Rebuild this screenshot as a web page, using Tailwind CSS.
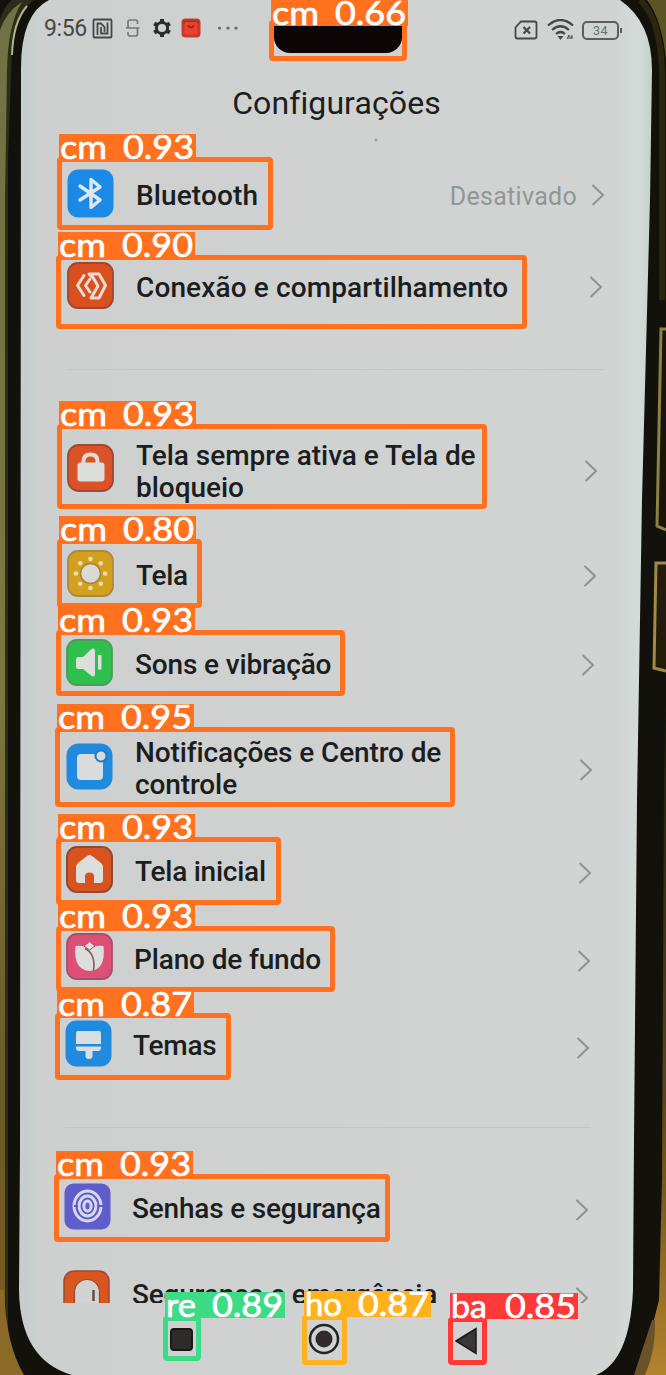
<!DOCTYPE html>
<html lang="pt-BR">
<head>
<meta charset="utf-8">
<title>Configurações</title>
<script src="https://cdn.jsdelivr.net/npm/@tailwindcss/browser@4"></script>
</head>
<body class="bg-[#14120c] font-['Roboto',sans-serif]">
<main class="relative w-[666px] h-[1375px] overflow-hidden text-[#1b1d1e]">

<!-- Phone body and lit screen -->
<svg class="absolute inset-0" width="666" height="1375" viewBox="0 0 666 1375">
  <defs>
    <linearGradient id="rim" x1="0" x2="0" y1="0" y2="1"><stop offset="0" stop-color="#6f7145"/><stop offset=".5" stop-color="#7c7742"/><stop offset=".8" stop-color="#6b5a26"/><stop offset="1" stop-color="#7a5c1c"/></linearGradient>
    <linearGradient id="gold" x1="0" x2="0" y1="0" y2="1"><stop offset="0" stop-color="#1d190b"/><stop offset=".6" stop-color="#5d4718"/><stop offset="1" stop-color="#b3832c"/></linearGradient>
    <linearGradient id="scr" x1="0" x2="1" y1="0" y2="0"><stop offset="0" stop-color="#c5cdcd"/><stop offset=".04" stop-color="#cdd0cf"/><stop offset=".94" stop-color="#d1d4d3"/><stop offset=".98" stop-color="#d3dbd8"/><stop offset="1" stop-color="#c3d0cb"/></linearGradient>
  </defs>
  <rect width="666" height="1375" fill="#12110b"/>
  <path d="M0 20Q4 6 12 0H34Q16 12 12 50L8 160V1375H0Z" fill="#2c2e18"/>
  <path d="M0 30Q6 12 22 2Q8 24 7 70L5 200V1375H0Z" fill="url(#rim)"/>
  <path d="M12 55Q13 22 27 6" fill="none" stroke="#aeb48c" stroke-width="2"/>
  <path d="M0 1290H4Q6 1345 24 1375H0Z" fill="#8a6a26"/>
  <path d="M647 0Q662 20 666 60V0Z" fill="#5c5426"/>
  <path d="M640 0Q660 18 662 70V300" fill="none" stroke="#2c2611" stroke-width="6"/>
  <path d="M666 700L664 780L662 1180L659 1300L640 1375H666Z" fill="url(#gold)"/>
  <path d="M652 1320L634 1375H645Q656 1350 655 1320Z" fill="#6a522a"/>
  <path d="M666 329H661L657 526L666 530" fill="#1a1508" stroke="#8d8144" stroke-width="3"/>
  <path d="M666 563H656L654 668L666 671" fill="#241b0a" stroke="#a08a45" stroke-width="3"/>
  <path d="M49 0Q21 14 21 68L20 1150L19 1290Q20 1360 72 1375H596Q630 1361 633 1290L634 1140L637 800L642 500L650 200L652 70Q652 22 620 0Z" fill="url(#scr)"/>
  <circle cx="376" cy="140" r="1.5" fill="#9a9d9c"/>
</svg>

<div class="relative flex flex-col">
  <!-- Status bar -->
  <header class="h-[56px] pl-[44px] pr-[44px] flex items-center text-[#454748]">
    <span class="text-[23px] leading-none tracking-[-0.4px]">9:56</span>
    <svg class="ml-[5px]" width="21" height="21" viewBox="0 0 21 21" fill="none" stroke="currentColor" stroke-width="1.8"><rect x="1.500" y="1.500" width="18" height="18" rx="1"/><path d="M5.500 17V5.500H9L12.500 9V14M9 9V15.500H15.500V4.500"/></svg>
    <svg class="ml-[12px]" width="16" height="21" viewBox="0 0 16 21" fill="none" stroke="#77797a" stroke-width="1.700"><path d="M12.500 6V4Q12.500 2 10.500 2H5Q3 2 3 4V8Q3 10 5 10H10.500Q12.500 10 12.500 12V15.500Q12.500 18 10.500 18H5Q3 18 3 15.500V14M1 10H14.500"/></svg>
    <svg class="ml-[11px]" width="20" height="20" viewBox="0 0 20 20" fill="none" stroke="#2b2d2e"><circle cx="10" cy="10" r="5.600" stroke-width="3"/><path d="M10 1V4M10 16V19M2.200 5.500L4.800 7M15.200 13L17.800 14.500M2.200 14.500L4.800 13M15.200 7L17.800 5.500" stroke-width="4"/></svg>
    <svg class="ml-[9px]" width="20" height="20" viewBox="0 0 20 20"><rect x=".5" y=".5" width="19" height="19" rx="4" fill="#cf382b"/><path d="M2 3Q10 0 18 3V6H2Z" fill="#a8352a"/><rect x="3.500" y="4" width="13" height="12.500" rx="2" fill="#e5452f"/><path d="M7 7.500Q10 11.500 13 7.500" fill="none" stroke="#8d1f18" stroke-width="1.600"/></svg>
    <svg class="ml-[16px]" width="22" height="4" viewBox="0 0 22 4" fill="#68696a"><circle cx="2.500" cy="2" r="1.600"/><circle cx="11" cy="2" r="1.600"/><circle cx="19" cy="2" r="1.600"/></svg>
    <div class="ml-auto flex items-center pt-1">
      <svg width="24" height="20" viewBox="0 0 24 20" fill="none" stroke="currentColor" stroke-width="1.800"><path d="M7 1.500H20.500Q22.500 1.500 22.500 3.500V16.500Q22.500 18.500 20.500 18.500H3.500Q1.500 18.500 1.500 16.500V7.500Z"/><path d="M9.500 7L16 13.500M16 7L9.500 13.500" stroke-width="2.200"/></svg>
      <svg class="ml-[9px]" width="28" height="22" viewBox="0 0 28 22" fill="none" stroke="currentColor" stroke-width="2.300"><path d="M1 6.500Q13.500 -4.500 26 6.500M5 11Q13.500 3.500 22 11M9 15Q13.500 11 18 15"/><path d="M10.500 17H16.500L13.500 21Z" fill="currentColor" stroke="none"/><path d="M20 20L22 16V20M24 20V17H26M23.500 19H26" stroke-width="1"/></svg>
      <div class="ml-[7px] w-[37px] h-[19px] border-2 border-[#5b5d5e] rounded-[5px] text-[12.500px] leading-[15px] text-center tracking-[0.5px] text-[#6b6d6e]">34</div>
      <div class="ml-[1px] w-[2px] h-[5px] bg-[#5b5d5e]"></div>
    </div>
  </header>

  <h1 class="h-[94px] pl-[7px] pt-[27px] text-center text-[32px] leading-[40px] tracking-[0.1px]">Configurações</h1>

  <section class="text-[28px] leading-[32px] font-medium">
    <div class="h-[90px] pl-[67px] pr-[61px] flex items-center">
      <svg class="mb-[4px] shrink-0" width="47" height="49" viewBox="0 0 47 49"><rect x=".5" y=".5" width="46" height="48" rx="11" fill="#1a8ae6"/><path d="M13 17L33 31L24 38.500V10.500L33 18L13 31" fill="none" stroke="#dfe8f0" stroke-width="3.400" stroke-linejoin="round" stroke-linecap="round"/></svg>
      <span class="ml-[22px] pt-[2px] tracking-[0.120px]">Bluetooth</span>
      <span class="ml-auto pt-[4px] text-[25px] font-normal text-[#929596] tracking-[0.300px]">Desativado</span>
      <svg class="ml-[14px]" width="14" height="22" viewBox="0 0 14 22" fill="none" stroke="#8f9293" stroke-width="2"><path d="M1.500 1L12 11L1.500 21"/></svg>
    </div>
    <div class="h-[94px] pl-[67px] pr-[63px] flex items-center">
      <svg class="mb-[4px] shrink-0" width="47" height="47" viewBox="0 0 47 47"><rect x="1" y="1" width="45" height="45" rx="10" fill="#d94f1e" stroke="#9a4934" stroke-width="1.800"/><g fill="none" stroke="#f0dcd4" stroke-width="3" stroke-linejoin="round" stroke-linecap="round"><path d="M17 13.500L10.500 23.500L17 33.500"/><path d="M22 12H32L38.500 23.500L32 36H24L31 24L26 15.500Z"/><path d="M23 17L18.500 23.500L23 30"/></g></svg>
      <span class="ml-[22px] pt-[2px] tracking-[0.120px]">Conexão e compartilhamento</span>
      <svg class="ml-auto" width="14" height="22" viewBox="0 0 14 22" fill="none" stroke="#8f9293" stroke-width="2"><path d="M1.500 1L12 11L1.500 21"/></svg>
    </div>
  </section>

  <div class="h-[76px] pl-[67px] pr-[62px] pt-[35px]"><hr class="border-[#c4c7c6]"></div>

  <section class="text-[28px] leading-[32px] font-medium">
    <div class="h-[120px] pl-[67px] pr-[68px] flex items-center">
      <svg class="mb-[4px] shrink-0" width="47" height="48" viewBox="0 0 47 48"><rect x="1" y="1" width="45" height="46" rx="11" fill="#dc5228" stroke="#9a4934" stroke-width="1.800"/><path d="M16.500 20V17Q16.500 10.500 23.500 10.500T30.500 17V20" fill="none" stroke="#dedcd8" stroke-width="4"/><rect x="10.500" y="18.500" width="27" height="19" rx="3" fill="#dcdedc"/></svg>
      <span class="ml-[22px] w-[380px] pt-[4px] tracking-[-0.030px]">Tela sempre ativa e Tela de<br>bloqueio</span>
      <svg class="ml-auto mt-[2px]" width="14" height="22" viewBox="0 0 14 22" fill="none" stroke="#8f9293" stroke-width="2"><path d="M1.500 1L12 11L1.500 21"/></svg>
    </div>
    <div class="h-[90px] pl-[67px] pr-[69px] flex items-center">
      <svg class="mb-[3px] shrink-0" width="47" height="47" viewBox="0 0 47 47"><rect x="1" y="1" width="45" height="45" rx="10" fill="#d3a01e" stroke="#a98a45" stroke-width="1.800"/><circle cx="23.500" cy="23.500" r="10" fill="#d8dad6" stroke="#a48431" stroke-width="1.500"/><g fill="#ecdcb4"><circle cx="23.500" cy="9" r="2.300"/><circle cx="23.500" cy="38" r="2.300"/><circle cx="9" cy="23.500" r="2.300"/><circle cx="38" cy="23.500" r="2.300"/><circle cx="13.200" cy="13.200" r="2.300"/><circle cx="33.800" cy="13.200" r="2.300"/><circle cx="13.200" cy="33.800" r="2.300"/><circle cx="33.800" cy="33.800" r="2.300"/></g></svg>
      <span class="ml-[22px] pt-[2px] tracking-[-0.300px]">Tela</span>
      <svg class="ml-auto mt-[2px]" width="14" height="22" viewBox="0 0 14 22" fill="none" stroke="#8f9293" stroke-width="2"><path d="M1.500 1L12 11L1.500 21"/></svg>
    </div>
    <div class="h-[88px] pl-[66px] pr-[71px] flex items-center">
      <svg class="mb-[4px] shrink-0" width="47" height="47" viewBox="0 0 47 47"><rect x="1" y="1" width="45" height="45" rx="10" fill="#2fbf4c" stroke="#4f9a5c" stroke-width="1.800"/><path d="M12 18H17L25 10.500Q29 8 29 12V35Q29 39 25 36.500L17 30H12Q10 30 10 28V20Q10 18 12 18Z" fill="#dcdfdb"/><rect x="32" y="16" width="3.500" height="14.500" fill="#dcdfdb"/></svg>
      <span class="ml-[22px] pt-[2px] tracking-[-0.150px]">Sons e vibração</span>
      <svg class="ml-auto mt-[2px]" width="14" height="22" viewBox="0 0 14 22" fill="none" stroke="#8f9293" stroke-width="2"><path d="M1.500 1L12 11L1.500 21"/></svg>
    </div>
    <div class="h-[120px] pl-[66px] pr-[73px] flex items-center">
      <svg class="mb-[4px] shrink-0" width="47" height="47" viewBox="0 0 47 47"><rect x=".5" y=".5" width="46" height="46" rx="12" fill="#1f8ade"/><rect x="11" y="11" width="26" height="26" rx="4" fill="#d8dcdc"/><circle cx="35" cy="13" r="5.500" fill="#d8dcdc" stroke="#1f7cc4" stroke-width="2"/></svg>
      <span class="ml-[22px] w-[380px] pt-[2px] tracking-[-0.120px]">Notificações e Centro de<br>controle</span>
      <svg class="ml-auto mt-[4px]" width="14" height="22" viewBox="0 0 14 22" fill="none" stroke="#8f9293" stroke-width="2"><path d="M1.500 1L12 11L1.500 21"/></svg>
    </div>
    <div class="h-[86px] pl-[66px] pr-[74px] flex items-center">
      <svg class="mb-[4px] shrink-0" width="47" height="47" viewBox="0 0 47 47"><rect x="1" y="1" width="45" height="45" rx="10" fill="#d9531f" stroke="#8f4a35" stroke-width="2"/><path d="M10 21Q10 19 12 17L21 10Q23.500 8 26 10L35 17Q37 19 37 21V34Q37 37 34 37H28V30Q28 26.500 23.500 26.500T19 30V37H13Q10 37 10 34Z" fill="#dcdedc"/></svg>
      <span class="ml-[22px] pt-[2px] tracking-[-0.250px]">Tela inicial</span>
      <svg class="ml-auto mt-[4px]" width="14" height="22" viewBox="0 0 14 22" fill="none" stroke="#8f9293" stroke-width="2"><path d="M1.500 1L12 11L1.500 21"/></svg>
    </div>
    <div class="h-[89px] pl-[66px] pr-[75px] flex items-center">
      <svg class="mb-[4px] shrink-0" width="47" height="47" viewBox="0 0 47 47"><rect x="1" y="1" width="45" height="45" rx="10" fill="#dc5078" stroke="#a54f6c" stroke-width="1.800"/><path d="M23.500 16Q29 12 37.500 13Q40 37 24 38Q7 37 9.500 13Q18 12 23.500 16Z" fill="#dcdedc"/><path d="M18 13L23.500 8.500L29 13L23.500 17Z" fill="#e8dadd" stroke="#a54f6c" stroke-width="1"/><path d="M19 15.500Q30 21 27.500 38" fill="none" stroke="#8a5a68" stroke-width="1.600"/></svg>
      <span class="ml-[21px] pt-[2px] tracking-[-0.150px]">Plano de fundo</span>
      <svg class="ml-auto mt-[4px]" width="14" height="22" viewBox="0 0 14 22" fill="none" stroke="#8f9293" stroke-width="2"><path d="M1.500 1L12 11L1.500 21"/></svg>
    </div>
    <div class="h-[84px] pl-[65px] pr-[76px] flex items-center">
      <svg class="mb-[3px] shrink-0" width="47" height="47" viewBox="0 0 47 47"><rect x=".5" y=".5" width="46" height="46" rx="11" fill="#1f8ade"/><path d="M11 13Q11 11 13 11H34Q36 11 36 13V24H11ZM11 26.500H36V28Q36 31 33 31H27.500V36Q27.500 39 24 39T20.500 36V31H14Q11 31 11 28Z" fill="#d8dfe2"/></svg>
      <span class="ml-[21px] pt-[2px] tracking-[-0.250px]">Temas</span>
      <svg class="ml-auto mt-[6px]" width="14" height="22" viewBox="0 0 14 22" fill="none" stroke="#8f9293" stroke-width="2"><path d="M1.500 1L12 11L1.500 21"/></svg>
    </div>
  </section>

  <div class="h-[78px] pl-[65px] pr-[75px] pt-[40px]"><hr class="border-[#c2c5c4]"></div>

  <section class="text-[28px] leading-[32px] font-medium">
    <div class="h-[86px] pl-[64px] pr-[77px] flex items-center">
      <svg class="mb-[4px] shrink-0" width="47" height="47" viewBox="0 0 47 47"><rect x=".5" y=".5" width="46" height="46" rx="9" fill="#5f5ccb"/><g fill="none" stroke="#d6d8ec" stroke-width="3"><ellipse cx="23.500" cy="23" rx="13.500" ry="15"/><ellipse cx="23.500" cy="23" rx="8.500" ry="10"/><ellipse cx="23.500" cy="23" rx="3.600" ry="5"/></g><path d="M33 23H39M14 23H10" stroke="#5f5ccb" stroke-width="2"/></svg>
      <span class="ml-[21px] pt-[2px] tracking-[-0.200px]">Senhas e segurança</span>
      <svg class="ml-auto mt-[4px]" width="14" height="22" viewBox="0 0 14 22" fill="none" stroke="#8f9293" stroke-width="2"><path d="M1.500 1L12 11L1.500 21"/></svg>
    </div>
    <div class="h-[52px] pl-[63px] pr-[77px] pt-[19px] flex items-start overflow-hidden">
      <svg class="shrink-0" width="47" height="47" viewBox="0 0 47 47"><rect x="1" y="1" width="45" height="45" rx="10" fill="#d9571f" stroke="#9a4934" stroke-width="1.500"/><path d="M11.500 47V22A12.500 12.500 0 0 1 36.500 22V47Z" fill="#d0d3d2" stroke="#9a4934" stroke-width="1.200"/><path d="M30.500 20V31" stroke="#6b4a42" stroke-width="2.500"/></svg>
      <span class="ml-[22px] mt-[9px] tracking-[-0.200px]">Segurança e emergência</span>
      <svg class="ml-auto mt-[17px] shrink-0" width="14" height="22" viewBox="0 0 14 22" fill="none" stroke="#8f9293" stroke-width="2"><path d="M1.500 1L12 11L1.500 21"/></svg>
    </div>
  </section>

  <!-- Navigation bar -->
  <nav class="h-[72px] pl-[170px] flex items-center">
    <div class="w-[23px] h-[23px] rounded-[4px] bg-[#2f2b2b] border-2 border-[#1a1718]"></div>
    <svg class="ml-[115px]" width="32" height="32" viewBox="0 0 32 32"><circle cx="16" cy="16" r="14" fill="none" stroke="#222425" stroke-width="2.500"/><circle cx="16" cy="16" r="8.500" fill="#2f2b2b"/></svg>
    <svg class="ml-[115px] mt-[3px]" width="22" height="28" viewBox="0 0 22 28"><path d="M1 14L21 1.500V26.500Z" fill="#3a3737" stroke="#1a1718" stroke-width="1.500"/></svg>
  </nav>
</div>

<!-- Camera cutout -->
<div class="absolute left-[274px] top-[20px] w-[128px] h-[33px] rounded-b-[16px] bg-[#0c0706]"></div>

<div id="marks"></div>
</main>

<script>
const tone = {
  cm: ['border-[#ff701f]', 'bg-[#ff701f]'],
  re: ['border-[#3ddb86]', 'bg-[#3ddb86]'],
  ho: ['border-[#ffb21d]', 'bg-[#ffb21d]'],
  ba: ['border-[#ff3838]', 'bg-[#ff3838]']
};
// name, score, outer box x0 y0 x1 y1, label x0 y0 x1
const marks = [
  ['cm', '0.66', 269, 20, 407, 61, 271, 0, 408],
  ['cm', '0.93', 57, 157, 273, 230, 59, 134, 196],
  ['cm', '0.90', 56, 255, 527, 329, 58, 232, 195],
  ['cm', '0.93', 57, 424, 487, 509, 59, 401, 196],
  ['cm', '0.80', 57, 539, 202, 608, 59, 516, 196],
  ['cm', '0.93', 56, 630, 345, 696, 58, 607, 195],
  ['cm', '0.95', 55, 727, 455, 807, 57, 704, 194],
  ['cm', '0.93', 56, 837, 281, 905, 58, 814, 195],
  ['cm', '0.93', 56, 926, 335, 992, 58, 903, 195],
  ['cm', '0.87', 55, 1013, 231, 1080, 57, 991, 194],
  ['cm', '0.93', 54, 1174, 390, 1242, 56, 1151, 193],
  ['re', '0.89', 163, 1316, 201, 1361, 165, 1292, 285],
  ['ho', '0.87', 302, 1315, 347, 1365, 304, 1291, 431],
  ['ba', '0.85', 448, 1317, 487, 1365, 450, 1293, 578]
];
const nameWidth = { cm: 47, re: 30, ho: 37, ba: 36 };
document.getElementById('marks').innerHTML = marks.map(([n, s, x0, y0, x1, y1, lx, ly, lr]) => `
  <div class="absolute border-[5px] rounded-[4px] ${tone[n][0]}" style="left:${x0}px;top:${y0}px;width:${x1 - x0}px;height:${y1 - y0}px"></div>
  <svg class="absolute overflow-visible ${tone[n][1]} font-['Lato',sans-serif] font-normal" style="left:${lx}px;top:${ly}px" width="${lr - lx}" height="26" fill="#fff" stroke="#fff" stroke-width=".7" stroke-linejoin="round" font-size="33">
    <text x="1" y="25" textLength="${nameWidth[n]}" lengthAdjust="spacingAndGlyphs">${n}</text>
    <text x="${lr - lx - 73}" y="25" textLength="71" lengthAdjust="spacingAndGlyphs">${s}</text>
  </svg>`).join('');
</script>
</body>
</html>
